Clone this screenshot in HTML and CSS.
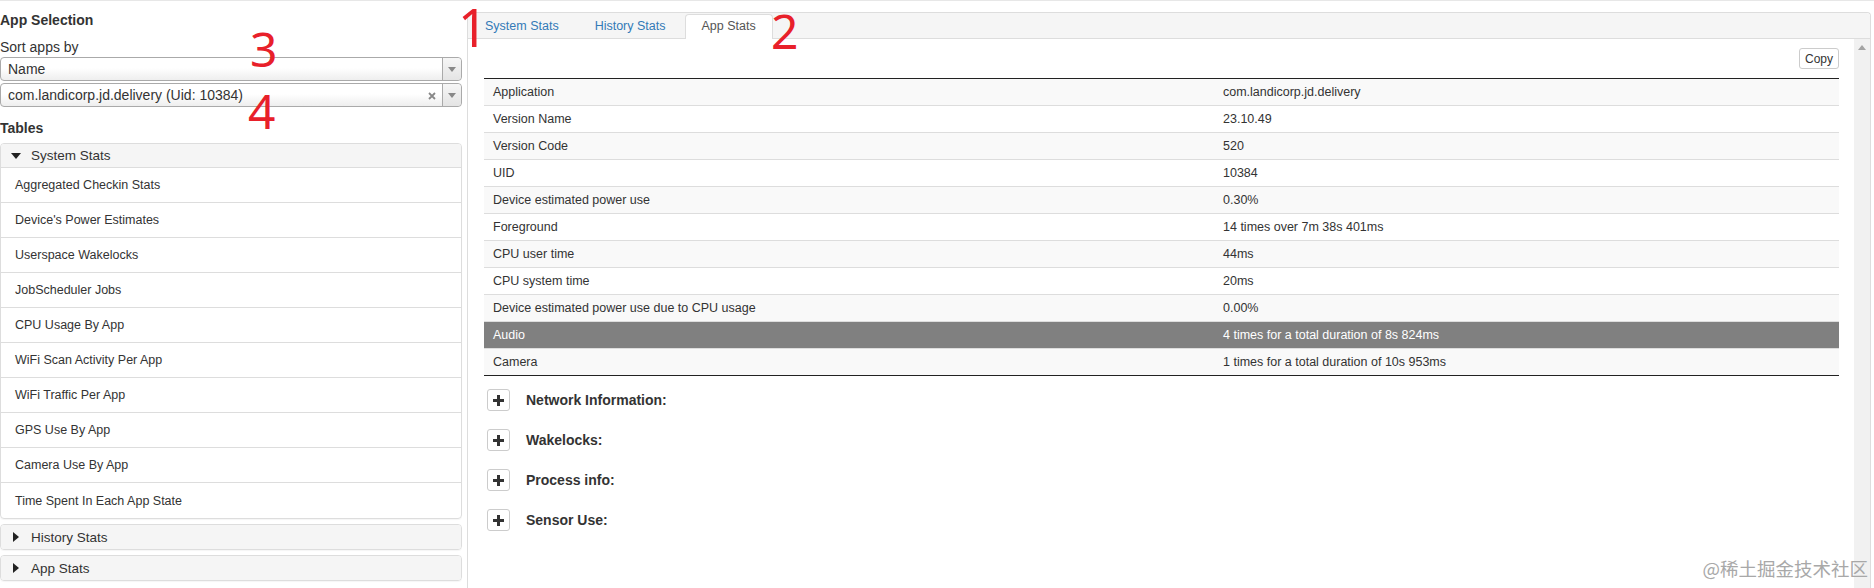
FILE: index.html
```html
<!DOCTYPE html>
<html lang="en">
<head>
    <meta charset="UTF-8">
    <title>Battery Historian - App Stats</title>
    <link rel="stylesheet" href="styles.css">
</head>
<body>

<div class="page">

    <!-- left: app selection + table list -->
    <aside class="sidebar">
        <div class="side-title">App Selection</div>
        <div class="sort-label">Sort apps by</div>
        <div class="select">
            <span class="select-text">Name</span>
            <span class="select-arrow"><i class="caret"></i></span>
        </div>
        <div class="select">
            <span class="select-text">com.landicorp.jd.delivery (Uid: 10384)</span>
            <span class="select-clear">
                <svg width="8" height="8" viewBox="0 0 8 8"><path d="M1 1L7 7M7 1L1 7" stroke="#888" stroke-width="1.8"/></svg>
            </span>
            <span class="select-arrow"><i class="caret"></i></span>
        </div>

        <div class="side-title tables-title">Tables</div>

        <div class="group open">
            <div class="group-head"><i class="tri-down"></i>System Stats</div>
            <div class="group-item">Aggregated Checkin Stats</div>
            <div class="group-item">Device's Power Estimates</div>
            <div class="group-item">Userspace Wakelocks</div>
            <div class="group-item">JobScheduler Jobs</div>
            <div class="group-item">CPU Usage By App</div>
            <div class="group-item">WiFi Scan Activity Per App</div>
            <div class="group-item">WiFi Traffic Per App</div>
            <div class="group-item">GPS Use By App</div>
            <div class="group-item">Camera Use By App</div>
            <div class="group-item">Time Spent In Each App State</div>
        </div>
        <div class="group">
            <div class="group-head"><i class="tri-right"></i>History Stats</div>
        </div>
        <div class="group">
            <div class="group-head"><i class="tri-right"></i>App Stats</div>
        </div>
    </aside>

    <!-- right: tabbed stats panel -->
    <section class="panel">
        <div class="tab-bar">
            <a class="tab">System Stats</a>
            <a class="tab">History Stats</a>
            <a class="tab active">App Stats</a>
        </div>
        <div class="panel-body">
            <div class="content">
                <div class="copy-row"><button class="copy-btn">Copy</button></div>
                <table class="stats">
                    <colgroup><col class="key-col"><col></colgroup>
                    <tr><td>Application</td><td>com.landicorp.jd.delivery</td></tr>
                    <tr><td>Version Name</td><td>23.10.49</td></tr>
                    <tr><td>Version Code</td><td>520</td></tr>
                    <tr><td>UID</td><td>10384</td></tr>
                    <tr><td>Device estimated power use</td><td>0.30%</td></tr>
                    <tr><td>Foreground</td><td>14 times over 7m 38s 401ms</td></tr>
                    <tr><td>CPU user time</td><td>44ms</td></tr>
                    <tr><td>CPU system time</td><td>20ms</td></tr>
                    <tr><td>Device estimated power use due to CPU usage</td><td>0.00%</td></tr>
                    <tr class="selected"><td>Audio</td><td>4 times for a total duration of 8s 824ms</td></tr>
                    <tr><td>Camera</td><td>1 times for a total duration of 10s 953ms</td></tr>
                </table>

                <div class="sections">
                    <div class="section"><span class="plus"><svg width="11" height="11" viewBox="0 0 11 11"><path d="M4 0h3v4h4v3H7v4H4V7H0V4h4z" fill="#333"/></svg></span><b>Network Information:</b></div>
                    <div class="section"><span class="plus"><svg width="11" height="11" viewBox="0 0 11 11"><path d="M4 0h3v4h4v3H7v4H4V7H0V4h4z" fill="#333"/></svg></span><b>Wakelocks:</b></div>
                    <div class="section"><span class="plus"><svg width="11" height="11" viewBox="0 0 11 11"><path d="M4 0h3v4h4v3H7v4H4V7H0V4h4z" fill="#333"/></svg></span><b>Process info:</b></div>
                    <div class="section"><span class="plus"><svg width="11" height="11" viewBox="0 0 11 11"><path d="M4 0h3v4h4v3H7v4H4V7H0V4h4z" fill="#333"/></svg></span><b>Sensor Use:</b></div>
                </div>
            </div>
            <div class="scrollbar"><i class="scroll-up"></i></div>
        </div>
    </section>
</div>

<!-- red annotations drawn over the screenshot -->
<span class="mark mark-1">1</span>
<span class="mark mark-2">2</span>
<span class="mark mark-3">3</span>
<span class="mark mark-4">4</span>

<div class="watermark">@稀土掘金技术社区</div>

</body>
</html>
```

FILE: styles.css
```css
* {
    box-sizing: border-box;
}
html, body {
    margin: 0;
    height: 588px;
    overflow: hidden;
}
body {
    font-family: "Liberation Sans", Arial, sans-serif;
    color: #333;
    background: #fff;
    border-top: 1px solid #e7e7e7;
    position: relative;
}
.page {
    display: flex;
    height: 100%;
}

/* sidebar */
.sidebar {
    width: 462px;
    flex: none;
    padding-top: 9px;
}
.side-title {
    font-size: 14px;
    font-weight: bold;
    line-height: 20px;
}
.sort-label {
    font-size: 14px;
    line-height: 20px;
    margin-top: 7px;
}
.select {
    height: 24px;
    border: 1px solid #aaa;
    border-radius: 4px;
    background: linear-gradient(to bottom, #fff 45%, #eee 100%);
    display: flex;
    align-items: center;
    font-size: 14px;
    margin-bottom: 2px;
}
.select-text {
    flex: 1;
    padding-left: 7px;
    white-space: nowrap;
}
.select-clear {
    width: 20px;
    display: flex;
    align-items: center;
    justify-content: center;
    padding-top: 2px;
}
.select-arrow {
    width: 19px;
    align-self: stretch;
    border-left: 1px solid #aaa;
    border-radius: 0 4px 4px 0;
    background: linear-gradient(to bottom, #f6f6f6, #e4e4e4);
    display: flex;
    align-items: center;
    justify-content: center;
}
.caret {
    width: 0;
    height: 0;
    border-left: 4px solid transparent;
    border-right: 4px solid transparent;
    border-top: 5px solid #888;
}
.tables-title {
    margin-top: 11px;
}
.group {
    border: 1px solid #ddd;
    border-radius: 4px;
    margin-top: 5px;
    box-shadow: 0 1px 1px rgba(0, 0, 0, 0.04);
}
.group-head {
    height: 24px;
    background: #f5f5f5;
    display: flex;
    align-items: center;
    padding-left: 10px;
    font-size: 13.5px;
    border-radius: 3px;
}
.group.open .group-head {
    border-bottom: 1px solid #ddd;
    border-radius: 3px 3px 0 0;
}
.tri-down, .tri-right {
    width: 10px;
    margin-right: 10px;
    display: flex;
    justify-content: center;
}
.tri-down::before {
    content: "";
    border-left: 5px solid transparent;
    border-right: 5px solid transparent;
    border-top: 6px solid #222;
}
.tri-right::before {
    content: "";
    border-top: 5px solid transparent;
    border-bottom: 5px solid transparent;
    border-left: 6px solid #222;
}
.group-item {
    height: 35px;
    border-bottom: 1px solid #ddd;
    padding-left: 14px;
    font-size: 12.5px;
    display: flex;
    align-items: center;
}
.group-item:last-child {
    border-bottom: 0;
}

/* right panel */
.panel {
    flex: 1;
    margin: 11px 3px 0 5px;
    border: 1px solid #ddd;
    border-bottom: 0;
    border-radius: 4px 4px 0 0;
    display: flex;
    flex-direction: column;
}
.tab-bar {
    height: 26px;
    background: #f5f5f5;
    border-bottom: 1px solid #ddd;
    border-radius: 4px 4px 0 0;
    display: flex;
    align-items: flex-end;
    padding-left: 0;
}
.tab {
    height: 25px;
    margin-bottom: -1px;
    margin-right: 2px;
    padding: 0 16px;
    line-height: 23px;
    border: 1px solid transparent;
    border-bottom: 0;
    border-radius: 4px 4px 0 0;
    font-size: 12.5px;
    color: #337ab7;
    cursor: pointer;
}
.tab.active {
    background: #fff;
    border-color: #ddd;
    color: #555;
}
.panel-body {
    flex: 1;
    display: flex;
}
.content {
    flex: 1;
    padding: 9px 15px 0 16px;
}
.scrollbar {
    width: 16px;
    background: #f1f1f1;
    display: flex;
    justify-content: center;
}
.scroll-up {
    margin-top: 6px;
    width: 0;
    height: 0;
    border-left: 4px solid transparent;
    border-right: 4px solid transparent;
    border-bottom: 5px solid #a3a3a3;
}
.copy-row {
    display: flex;
    justify-content: flex-end;
}
.copy-btn {
    width: 40px;
    height: 21px;
    padding: 0;
    font-family: inherit;
    font-size: 12px;
    color: #333;
    background: #fff;
    border: 1px solid #ccc;
    border-radius: 3px;
}
.stats {
    width: 100%;
    margin-top: 9px;
    border-collapse: collapse;
    table-layout: fixed;
    font-size: 12.5px;
    border-top: 1px solid #222;
    border-bottom: 1px solid #222;
}
.key-col {
    width: 730px;
}
.stats td {
    height: 27px;
    padding: 0 9px;
    border-bottom: 1px solid #ddd;
    white-space: nowrap;
}
.stats tr:nth-child(odd) td {
    background: #f9f9f9;
}
.stats tr:last-child td {
    border-bottom: 1px solid #222;
}
.stats tr.selected td {
    background: #808080;
    color: #fff;
}
.sections {
    margin-top: 13px;
    padding-left: 3px;
}
.section {
    display: flex;
    align-items: center;
    height: 22px;
    margin-bottom: 18px;
    font-size: 14px;
}
.plus {
    width: 23px;
    height: 22px;
    border: 1px solid #ccc;
    border-radius: 3px;
    display: flex;
    align-items: center;
    justify-content: center;
    margin-right: 16px;
}

/* overlays */
.mark {
    position: absolute;
    font-family: "Noto Sans", sans-serif;
    font-size: 48px;
    line-height: 1;
    color: #e8202a;
    pointer-events: none;
}
.mark-1 { left: 458px; top: 0; font-size: 52px; }
.mark-2 { left: 771px; top: 6px; }
.mark-3 { left: 250px; top: 24px; }
.mark-4 { left: 248px; top: 86px; }
.watermark {
    position: absolute;
    right: 6px;
    bottom: 7px;
    font-family: "Noto Sans CJK SC", sans-serif;
    font-size: 18.5px;
    color: #a8a8a8;
}
```
